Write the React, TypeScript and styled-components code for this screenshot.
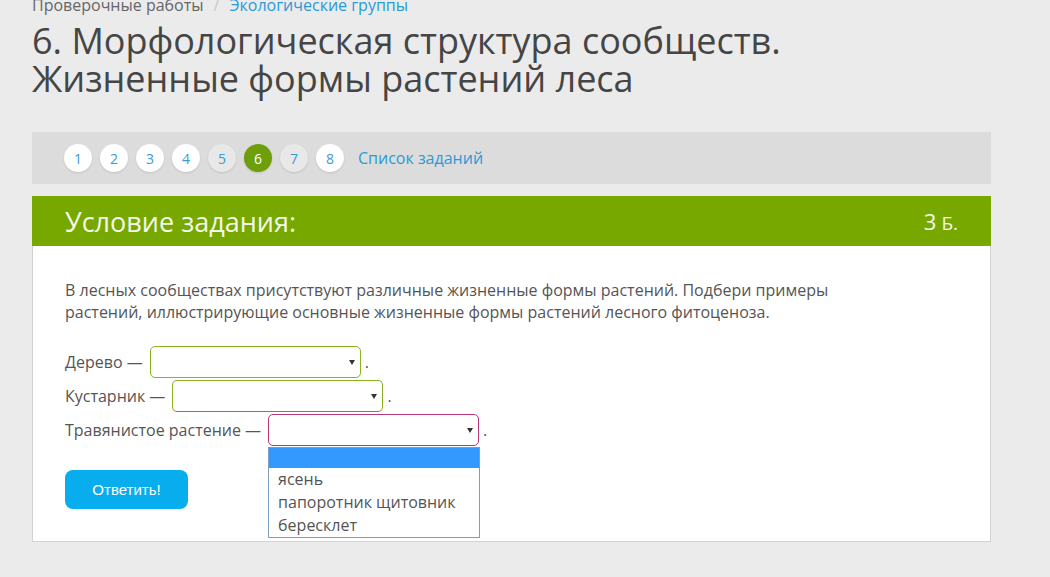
import React from 'react';
import styled, { createGlobalStyle } from 'styled-components';

const GlobalStyle = createGlobalStyle`
  html, body {
    margin: 0;
    padding: 0;
    background: #ebebeb;
    font-family: "Open Sans", "Liberation Sans", sans-serif;
  }
`;

const Page = styled.div`
  width: 959px;
  padding-left: 32px;
`;

const Breadcrumbs = styled.div`
  margin-top: -6px;
  font-size: 16px;
  line-height: 22px;
  color: #666;
  display: flex;
  gap: 8px;
`;

const Crumb = styled.span<{ $link?: boolean }>`
  color: ${(p) => (p.$link ? '#2a9ad8' : '#666')};
`;

const Slash = styled.span`
  color: #c8c8c8;
  padding: 0 2px;
`;

const Title = styled.h1`
  margin: 6px 0 0;
  font-size: 36px;
  line-height: 38px;
  font-weight: 400;
  color: #454545;
`;

const Pager = styled.div`
  margin-top: 34px;
  height: 52px;
  background: #dcdcdc;
  display: flex;
  align-items: center;
  padding-left: 32px;
  gap: 8px;
`;

const PageDot = styled.span<{ $state?: 'active' | 'visited' }>`
  width: 28px;
  height: 28px;
  border-radius: 50%;
  display: flex;
  align-items: center;
  justify-content: center;
  font-size: 14px;
  box-shadow: 0 1px 2px rgba(0, 0, 0, 0.12);
  background: ${(p) =>
    p.$state === 'active' ? '#6e9f0b' : p.$state === 'visited' ? '#e8e8e8' : '#ffffff'};
  color: ${(p) => (p.$state === 'active' ? '#ffffff' : '#3a9ad9')};
`;

const TaskList = styled.span`
  margin-left: 6px;
  font-size: 16px;
  color: #2a9ad8;
`;

const Card = styled.div`
  margin-top: 12px;
`;

const CardHeader = styled.div`
  height: 50px;
  background: #77a800;
  color: #f4f8ea;
  display: flex;
  align-items: center;
  justify-content: space-between;
  padding: 0 33px;
`;

const HeaderTitle = styled.span`
  font-size: 27px;
`;

const Points = styled.span`
  font-size: 22px;
  small {
    font-size: 19px;
    margin-left: 5px;
  }
`;

const CardBody = styled.div`
  background: #fff;
  border: 1px solid #d2d2d2;
  border-top: none;
  padding: 33px 32px 32px;
  color: #555;
`;

const Text = styled.p`
  margin: 0;
  max-width: 800px;
  font-size: 16px;
  line-height: 22px;
`;

const Rows = styled.div`
  margin-top: 23px;
  display: flex;
  flex-direction: column;
  gap: 2px;
`;

const Row = styled.div`
  display: flex;
  align-items: center;
  font-size: 16px;
  height: 32px;
`;

const Label = styled.span`
  margin-right: 7px;
`;

const SelectWrap = styled.div`
  position: relative;
`;

const SelectBox = styled.div<{ $tone: 'ok' | 'warn' | 'focus' }>`
  width: 209px;
  height: 30px;
  border: 1px solid ${(p) => (p.$tone === 'focus' ? '#b8357a' : '#8ab41e')};
  border-bottom-color: ${(p) =>
    p.$tone === 'focus' ? '#b8357a' : p.$tone === 'warn' ? '#c4622c' : '#8ab41e'};
  border-radius: 5px;
  background: #fff;
  position: relative;
  &::after {
    content: '';
    position: absolute;
    right: 5px;
    top: 13px;
    border-left: 3px solid transparent;
    border-right: 3px solid transparent;
    border-top: 5px solid #333;
  }
`;

const Dot = styled.span`
  margin-left: 4px;
`;

const DropList = styled.ul`
  position: absolute;
  left: 0;
  top: 33px;
  width: 210px;
  margin: 0;
  padding: 0;
  list-style: none;
  background: #fff;
  border: 1px solid #7d9ec4;
  z-index: 2;
`;

const Option = styled.li<{ $selected?: boolean }>`
  height: ${(p) => (p.$selected ? '20px' : '23px')};
  line-height: 23px;
  padding-left: 9px;
  font-size: 16px;
  color: #555;
  background: ${(p) => (p.$selected ? '#3399ff' : 'transparent')};
`;

const AnswerButton = styled.button`
  margin-top: 24px;
  width: 123px;
  height: 39px;
  border: none;
  border-radius: 8px;
  background: #08aded;
  color: #fff;
  font-family: "Liberation Sans", Arial, sans-serif;
  font-size: 15px;
`;

const pages = [1, 2, 3, 4, 5, 6, 7, 8];
const pageState = (n: number) => (n === 6 ? 'active' : n === 5 || n === 7 ? 'visited' : undefined);

const rows: { label: string; tone: 'ok' | 'warn' | 'focus'; open?: boolean }[] = [
  { label: 'Дерево —', tone: 'ok' },
  { label: 'Кустарник —', tone: 'warn' },
  { label: 'Травянистое растение —', tone: 'focus', open: true },
];

const options = ['ясень', 'папоротник щитовник', 'бересклет'];

export default function App() {
  return (
    <Page>
      <GlobalStyle />
      <Breadcrumbs>
        <Crumb>Проверочные работы</Crumb>
        <Slash>/</Slash>
        <Crumb $link>Экологические группы</Crumb>
      </Breadcrumbs>
      <Title>
        6. Морфологическая структура сообществ.
        <br />
        Жизненные формы растений леса
      </Title>

      <Pager>
        {pages.map((n) => (
          <PageDot key={n} $state={pageState(n)}>
            {n}
          </PageDot>
        ))}
        <TaskList>Список заданий</TaskList>
      </Pager>

      <Card>
        <CardHeader>
          <HeaderTitle>Условие задания:</HeaderTitle>
          <Points>
            3<small>Б.</small>
          </Points>
        </CardHeader>
        <CardBody>
          <Text>
            В лесных сообществах присутствуют различные жизненные формы растений. Подбери примеры
            растений, иллюстрирующие основные жизненные формы растений лесного фитоценоза.
          </Text>
          <Rows>
            {rows.map((r) => (
              <Row key={r.label}>
                <Label>{r.label}</Label>
                <SelectWrap>
                  <SelectBox $tone={r.tone} />
                  {r.open && (
                    <DropList>
                      <Option $selected />
                      {options.map((o) => (
                        <Option key={o}>{o}</Option>
                      ))}
                    </DropList>
                  )}
                </SelectWrap>
                <Dot>.</Dot>
              </Row>
            ))}
          </Rows>
          <AnswerButton>Ответить!</AnswerButton>
        </CardBody>
      </Card>
    </Page>
  );
}
